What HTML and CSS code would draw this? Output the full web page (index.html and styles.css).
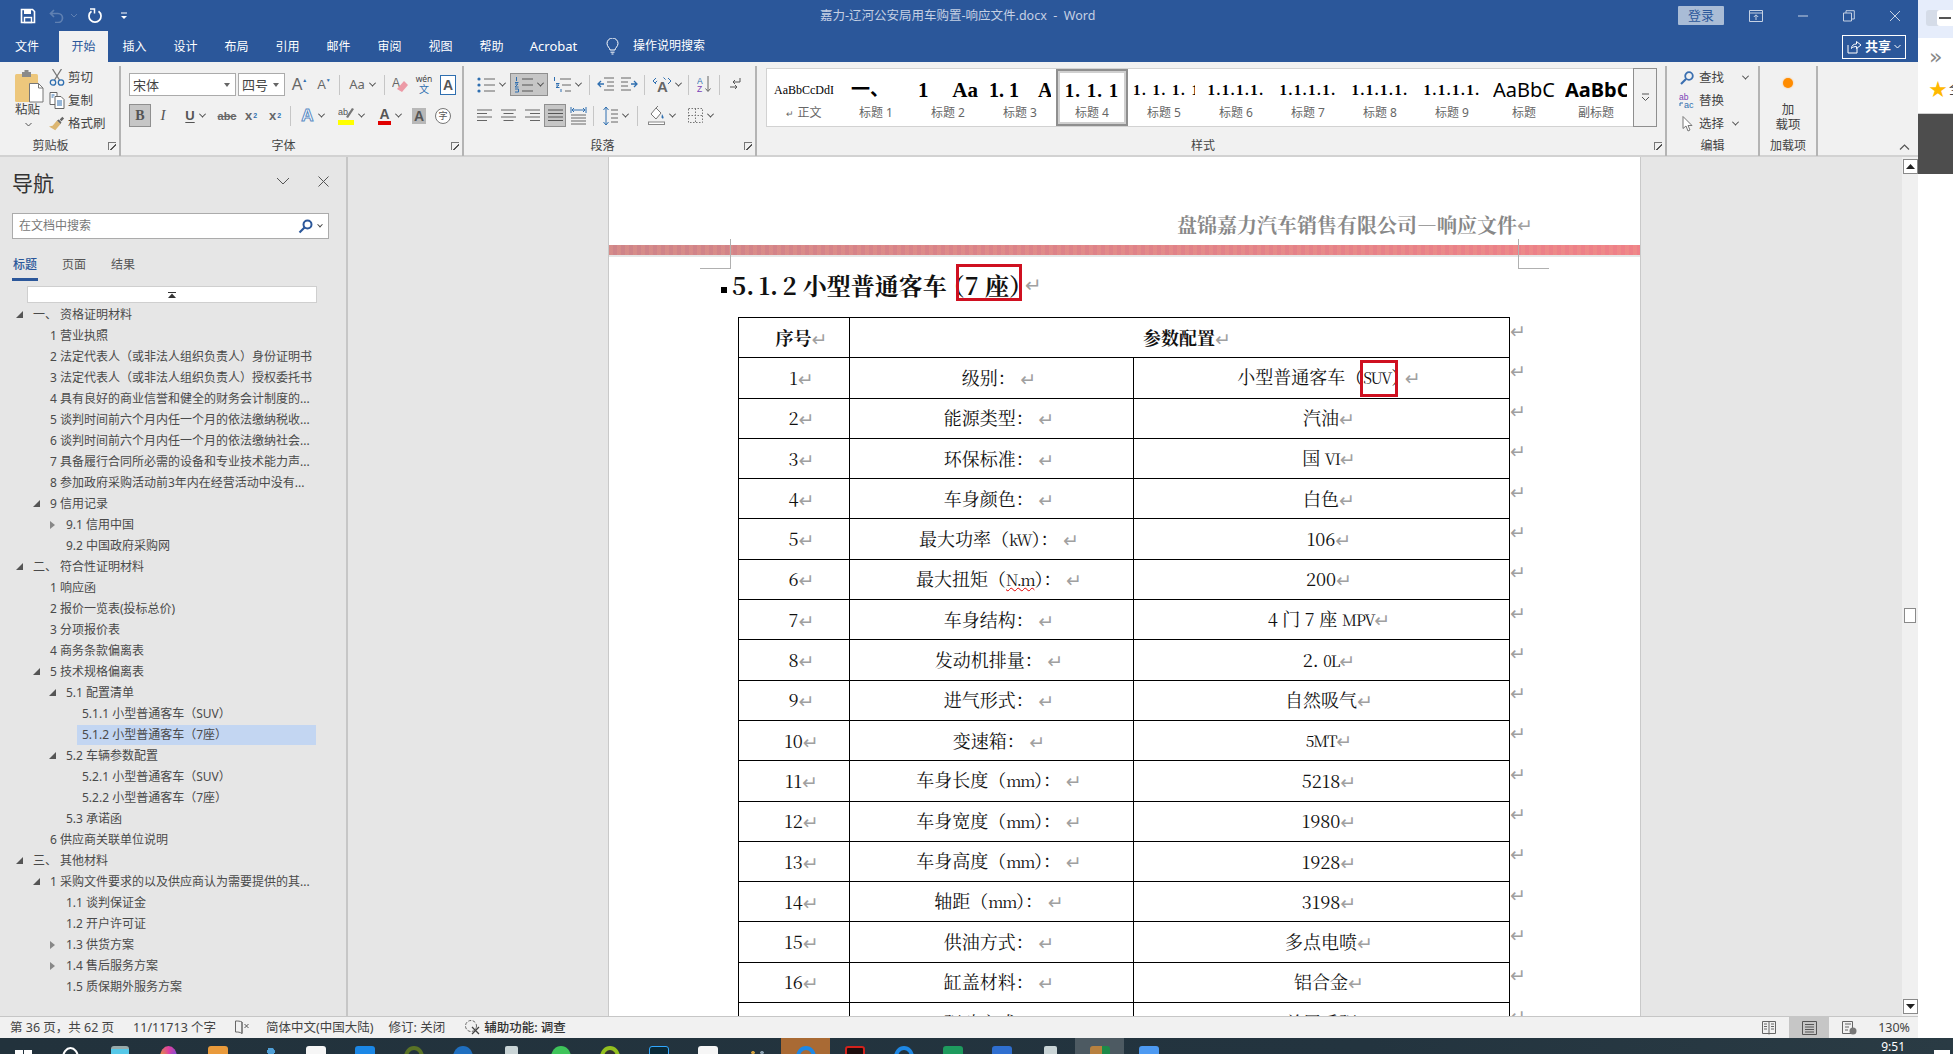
FILE: index.html
```html
<!DOCTYPE html>
<html lang="zh-CN">
<head>
<meta charset="utf-8">
<title>嘉力-辽河公安局用车购置-响应文件.docx - Word</title>
<link rel="stylesheet" href="styles.css">
</head>
<body>
<div class="screen">
<div class="word">
  <header class="titlebar">
    <div class="qat">
      <svg class="q-save" width="16" height="16" viewBox="0 0 16 16"><path d="M1.5 1.5h11l2 2v11h-13z" fill="none" stroke="#fff" stroke-width="1.6"/><rect x="4" y="2" width="7" height="4" fill="#fff"/><rect x="4.5" y="9.5" width="7" height="5" fill="none" stroke="#fff" stroke-width="1.4"/></svg>
      <svg class="q-undo" width="28" height="15" viewBox="0 0 28 15"><path d="M5 2L1.5 5.5 5 9M2 5.5h7a4.5 4.5 0 0 1 0 9H6" fill="none" stroke="#5f80b2" stroke-width="1.7"/><path d="M22 6l3 3 3-3" fill="none" stroke="#5f80b2" stroke-width="1"/></svg>
      <svg class="q-redo" width="14" height="16" viewBox="0 0 14 16"><path d="M3.5 3.2a6 6 0 1 0 7 0" fill="none" stroke="#fff" stroke-width="1.7"/><path d="M2 1h4.5v4.6" fill="none" stroke="#fff" stroke-width="1.5"/></svg>
      <svg class="q-more" width="8" height="8" viewBox="0 0 8 8"><path d="M1 1h6" stroke="#fff"/><path d="M1 4h6L4 7z" fill="#fff"/></svg>
    </div>
    <div class="doc-title">嘉力-辽河公安局用车购置-响应文件.docx  -  Word</div>
    <div class="win-controls">
      <span class="login">登录</span>
      <svg class="wc wc-first" width="14" height="12" viewBox="0 0 14 12"><path d="M.5.5h13v11H.5zM.5 3h13M7 10V5M4.8 7L7 4.8 9.2 7" fill="none" stroke="#c6d2e4"/></svg>
      <svg class="wc" width="12" height="12" viewBox="0 0 12 12"><path d="M1 6h10" stroke="#c6d2e4"/></svg>
      <svg class="wc" width="12" height="12" viewBox="0 0 12 12"><path d="M.5 3h8v8h-8zM3 3V.7h8.3V9H8.5" fill="none" stroke="#c6d2e4"/></svg>
      <svg class="wc" width="12" height="12" viewBox="0 0 12 12"><path d="M1 1l10 10M11 1L1 11" stroke="#c6d2e4"/></svg>
    </div>
  </header>

  <nav class="tabs">
    <span class="tab first">文件</span>
    <span class="tab active">开始</span>
    <span class="tab">插入</span>
    <span class="tab">设计</span>
    <span class="tab">布局</span>
    <span class="tab">引用</span>
    <span class="tab">邮件</span>
    <span class="tab">审阅</span>
    <span class="tab">视图</span>
    <span class="tab">帮助</span>
    <span class="tab acro">Acrobat</span>
    <svg class="bulb" width="13" height="17" viewBox="0 0 13 17"><path d="M4 12c0-2-3-3.500-3-6.500a5.500 5.500 0 0 1 11 0c0 3-3 4.500-3 6.500zM4.500 14.200h4M5.500 16h2" fill="none" stroke="#fff"/></svg>
    <span class="tell">操作说明搜索</span>
    <span class="share">
      <svg width="15" height="15" viewBox="0 0 15 15"><path d="M1 6v8h9V9M4.500 9.500c0-3 2-4.500 5-4.500V2.500L14 6l-4.500 3.500V7.500c-2 0-4 .5-5 2z" fill="none" stroke="#fff"/></svg>
      <b>共享</b>
      <svg width="7" height="5" viewBox="0 0 7 5"><path d="M.5 1l3 3 3-3" fill="none" stroke="#fff"/></svg>
    </span>
  </nav>

  <section class="ribbon">
    <div class="group g-clip">
      <div class="clip-body">
        <div class="paste">
          <svg width="29" height="33" viewBox="0 0 29 33"><rect x="0" y="4" width="23" height="28" rx="1.500" fill="#edc77c"/><rect x="7" y="2" width="9" height="5" fill="#8a8a8a"/><rect x="9.500" y="0" width="4" height="3" fill="#8a8a8a"/><path d="M14.500 13.500h9l4.500 4.500v14h-13.500z" fill="#fff" stroke="#777"/><path d="M23.500 13.500V18H28" fill="none" stroke="#777"/></svg>
          <span>粘贴</span>
          <svg class="caret" width="7" height="5" viewBox="0 0 7 5"><path d="M.5 1l3 3 3-3" fill="none" stroke="#555"/></svg>
        </div>
        <div class="clip-list">
          <div class="clip-item"><svg width="15" height="17" viewBox="0 0 15 17"><path d="M3 0l7 11M12 0L5 11" stroke="#777" stroke-width="1.300"/><circle cx="3.500" cy="13.500" r="2.700" fill="none" stroke="#2f6fb0" stroke-width="1.300"/><circle cx="11.500" cy="13.500" r="2.700" fill="none" stroke="#2f6fb0" stroke-width="1.300"/></svg><span>剪切</span></div>
          <div class="clip-item"><svg width="15" height="17" viewBox="0 0 15 17"><path d="M.5.500h7v12h-7z" fill="#fff" stroke="#666"/><path d="M5.500 4.500h6l3 3v9h-9z" fill="#fff" stroke="#666"/><path d="M7.500 9h5M7.500 11h5M7.500 13h5M2 3h3M2 5h2" stroke="#2f6fb0"/></svg><span>复制</span></div>
          <div class="clip-item"><svg width="18" height="17" viewBox="0 0 18 17"><path d="M9 5l4 4-6 7-7-4 4-1z" fill="#dcb671"/><path d="M9 5l2-1 3 3-1 2zM12 4l3-3 2 2-3 3z" fill="#666"/></svg><span>格式刷</span></div>
        </div>
      </div>
      <div class="g-label">剪贴板<i class="launch"></i></div>
    </div>

    <div class="group g-font">
      <div class="g-rows">
        <div class="trow">
          <div class="combo w107"><span>宋体</span><i class="drop"></i></div>
          <div class="combo w47"><span>四号</span><i class="drop"></i></div>
          <span class="t w25 ag">A<sup class="up">▲</sup></span>
          <span class="t w24 ag small">A<sup class="up">▼</sup></span>
          <i class="sep"></i>
          <span class="t w38 gray">Aa<i class="chev"></i></span>
          <i class="sep"></i>
          <span class="t w24"><svg width="17" height="18" viewBox="0 0 17 18"><text x="0" y="11" font-size="12" fill="#666" font-family="Liberation Sans">A</text><path d="M5 13l7-8 4 4-6 7z" fill="#ec9aa6"/></svg></span>
          <span class="t w24 wen"><small>wén</small><em>文</em></span>
          <span class="t w24"><span class="abox">A</span></span>
        </div>
        <div class="trow">
          <span class="t w22 on bold">B</span>
          <span class="t w24 ital">I</span>
          <span class="t w40 under"><u>U</u><i class="chev"></i></span>
          <span class="t w24 abc">abc</span>
          <span class="t w24 xs">x<sub>2</sub></span>
          <span class="t w24 xs">x<sup>2</sup></span>
          <i class="sep"></i>
          <span class="t w37 glow">A<i class="chev"></i></span>
          <span class="t w40 hl"><svg width="16" height="19" viewBox="0 0 16 19"><text x="0" y="9" font-size="9" fill="#555" font-family="Liberation Sans">ab</text><path d="M8 11l6-9 2 1-6 9z" fill="#777"/><rect y="14" width="16" height="5" fill="#ff0"/></svg><i class="chev"></i></span>
          <span class="t w37 redA"><span>A</span><i class="chev"></i></span>
          <span class="t w22"><span class="shade">A</span></span>
          <span class="t w26"><span class="circ">字</span></span>
        </div>
      </div>
      <div class="g-label">字体<i class="launch"></i></div>
    </div>

    <div class="group g-para">
      <div class="g-rows">
        <div class="trow">
          <span class="t w38"><svg width="18" height="16" viewBox="0 0 18 16"><path d="M7 2h11M7 8h11M7 14h11" stroke="#666"/><circle cx="2" cy="2" r="1.600" fill="#2f6fb0"/><circle cx="2" cy="8" r="1.600" fill="#2f6fb0"/><circle cx="2" cy="14" r="1.600" fill="#2f6fb0"/></svg><i class="chev"></i></span>
          <span class="t w38 on"><svg width="18" height="16" viewBox="0 0 18 16"><path d="M7 2h11M7 8h11M7 14h11" stroke="#555"/><path d="M1.500 0v4M0 5.500h3.500M0 7h3L0 10h3.500M0 12h3.500v3H0" stroke="#2f6fb0" fill="none"/></svg><i class="chev"></i></span>
          <span class="t w38"><svg width="18" height="16" viewBox="0 0 18 16"><path d="M7 2h11M9 8h9M12 14h6" stroke="#666"/><path d="M1.500 0v4M3 6.500h3.500M3 8h3L3 10.500h3.500M8 12v3" stroke="#2f6fb0" fill="none"/></svg><i class="chev"></i></span>
          <i class="sep"></i>
          <span class="t w24"><svg width="17" height="15" viewBox="0 0 17 15"><path d="M7 1h10M10 5h7M10 9h7M7 13h10" stroke="#666"/><path d="M7 7H1M4 4L1 7l3 3" fill="none" stroke="#2f6fb0" stroke-width="1.300"/></svg></span>
          <span class="t w24"><svg width="17" height="15" viewBox="0 0 17 15"><path d="M0 1h10M0 5h7M0 9h7M0 13h10" stroke="#666"/><path d="M10 7h6M13 4l3 3-3 3" fill="none" stroke="#2f6fb0" stroke-width="1.300"/></svg></span>
          <i class="sep"></i>
          <span class="t w37"><svg width="18" height="17" viewBox="0 0 18 17"><path d="M2 7l7-7 7 7" fill="none" stroke="#2f6fb0" stroke-width="1" stroke-dasharray="3 9"/><text x="4" y="16" font-size="15" font-weight="700" fill="#666" font-family="Liberation Sans">A</text><path d="M0 5l3-3M0 5l3 3M18 5l-3-3M18 5l-3 3" stroke="#2f6fb0"/></svg><i class="chev"></i></span>
          <i class="sep"></i>
          <span class="t w24"><svg width="15" height="17" viewBox="0 0 15 17"><text x="0" y="7.500" font-size="8.500" fill="#2f6fb0" font-family="Liberation Sans">A</text><text x="0" y="16" font-size="8.500" fill="#7a3fb5" font-family="Liberation Sans">Z</text><path d="M11 0v15M8.500 12.500L11 15.500l2.500-3" fill="none" stroke="#666"/></svg></span>
          <i class="sep"></i>
          <span class="t w24"><svg width="11" height="13" viewBox="0 0 11 13"><path d="M10 0v4H3M5 2L3 4l2 2M0 9h7M5 7l2 2-2 2" fill="none" stroke="#555"/></svg></span>
        </div>
        <div class="trow">
          <span class="t w24"><svg width="15" height="13" viewBox="0 0 15 13"><path d="M0 1h15M0 4.500h10M0 8h15M0 11.500h10" stroke="#666"/></svg></span>
          <span class="t w24"><svg width="15" height="13" viewBox="0 0 15 13"><path d="M0 1h15M2.500 4.500h10M0 8h15M2.500 11.500h10" stroke="#666"/></svg></span>
          <span class="t w24"><svg width="15" height="13" viewBox="0 0 15 13"><path d="M0 1h15M5 4.500h10M0 8h15M5 11.500h10" stroke="#666"/></svg></span>
          <span class="t w22 on"><svg width="15" height="13" viewBox="0 0 15 13"><path d="M0 1h15M0 4.500h15M0 8h15M0 11.500h15" stroke="#555"/></svg></span>
          <span class="t w24"><svg width="17" height="18" viewBox="0 0 17 18"><path d="M1 0v6M16 0v6M2 3h13M4 1L2 3l2 2M13 1l2 2-2 2" fill="none" stroke="#2f6fb0"/><path d="M1 8h15M1 11h15M1 14h15M1 17h15" stroke="#666"/></svg></span>
          <i class="sep"></i>
          <span class="t w37"><svg width="15" height="20" viewBox="0 0 15 20"><path d="M3 1v18M.5 4L3 1l2.500 3M.5 16L3 19l2.500-3" fill="none" stroke="#2f6fb0"/><path d="M8 4h7M8 8h7M8 12h7M8 16h7" stroke="#666"/></svg><i class="chev"></i></span>
          <i class="sep"></i>
          <span class="t w40"><svg width="17" height="19" viewBox="0 0 17 19"><path d="M3 8l5-6 5 5-5 6zM8 2l2-2" fill="#fff" stroke="#777"/><path d="M14 8c1 2 2 3 1.500 4s-2 .5-2-1z" fill="#2f6fb0"/><rect x=".5" y="16" width="16" height="2.500" fill="#fff" stroke="#888"/></svg><i class="chev"></i></span>
          <span class="t w38"><svg width="15" height="15" viewBox="0 0 15 15"><path d="M.5.500h14v14H.5zM7.500.5v14M.5 7.500h14" fill="none" stroke="#777" stroke-dasharray="1.500 1.500"/></svg><i class="chev"></i></span>
        </div>
      </div>
      <div class="g-label">段落<i class="launch"></i></div>
    </div>

    <div class="group g-style">
      <div class="gallery-row">
        <div class="gallery">
          <div class="sty"><span class="pv p0">AaBbCcDdI</span><span class="sl"><i class="tiny">↵</i> 正文</span></div>
          <div class="sty"><span class="pv p1">一、</span><span class="sl">标题 1</span></div>
          <div class="sty"><span class="pv p2">1    Aa</span><span class="sl">标题 2</span></div>
          <div class="sty"><span class="pv p3">1. 1    Aa</span><span class="sl">标题 3</span></div>
          <div class="sty sel"><span class="pv p4">1. 1. 1</span><span class="sl">标题 4</span></div>
          <div class="sty"><span class="pv p5">1. 1. 1. 1</span><span class="sl">标题 5</span></div>
          <div class="sty"><span class="pv p5">1.1.1.1.</span><span class="sl">标题 6</span></div>
          <div class="sty"><span class="pv p5">1.1.1.1.</span><span class="sl">标题 7</span></div>
          <div class="sty"><span class="pv p5">1.1.1.1.</span><span class="sl">标题 8</span></div>
          <div class="sty"><span class="pv p5">1.1.1.1.</span><span class="sl">标题 9</span></div>
          <div class="sty"><span class="pv p6">AaBbC</span><span class="sl">标题</span></div>
          <div class="sty"><span class="pv p7">AaBbCc</span><span class="sl">副标题</span></div>
        </div>
        <div class="gal-more"><svg width="9" height="9" viewBox="0 0 9 9"><path d="M1 1h7" stroke="#555"/><path d="M1 4l3.500 3.500L8 4" fill="none" stroke="#555"/></svg></div>
      </div>
      <div class="g-label">样式<i class="launch"></i></div>
    </div>

    <div class="group g-edit">
      <div class="edit-list">
        <div class="edit-item"><svg width="14" height="14" viewBox="0 0 14 14"><circle cx="9" cy="5" r="3.800" fill="none" stroke="#3a6fb0" stroke-width="1.800"/><path d="M6 8l-5 5" stroke="#3a6fb0" stroke-width="2.200"/></svg><span>查找</span><i class="chev far"></i></div>
        <div class="edit-item"><svg width="16" height="15" viewBox="0 0 16 15"><text x="0" y="7" font-size="8.500" fill="#7a3fb5" font-family="Liberation Sans">ab</text><text x="5" y="15" font-size="9" fill="#2f6fb0" font-family="Liberation Sans">ac</text><path d="M4 10H1v3" fill="none" stroke="#2f6fb0"/></svg><span>替换</span></div>
        <div class="edit-item"><svg width="14" height="16" viewBox="0 0 14 16"><path d="M3 .500v12l3-2.500 2 5 2-1-2-4.500h4z" fill="#fff" stroke="#777"/></svg><span>选择</span><i class="chev"></i></div>
      </div>
      <div class="g-label">编辑</div>
    </div>

    <div class="group g-addin">
      <div class="addin-body"><i class="dot"></i><span>加<br>载项</span></div>
      <div class="g-label">加载项</div>
    </div>

    <div class="collapse"><svg width="11" height="6" viewBox="0 0 11 6"><path d="M1 5.500l4.500-4.500L10 5.500" fill="none" stroke="#555" stroke-width="1.200"/></svg></div>
  </section>

  <main class="workspace">
    <aside class="nav">
      <div class="nav-head">
        <h2>导航</h2>
        <svg class="nav-chev" width="14" height="8" viewBox="0 0 14 8"><path d="M1 1l6 6 6-6" fill="none" stroke="#555"/></svg>
        <svg class="nav-x" width="11" height="11" viewBox="0 0 11 11"><path d="M.5.500l10 10M10.500.5l-10 10" stroke="#555"/></svg>
      </div>
      <div class="search">
        <span>在文档中搜索</span>
        <svg width="15" height="15" viewBox="0 0 15 15"><circle cx="9.500" cy="5.500" r="4" fill="none" stroke="#2b579a" stroke-width="2"/><path d="M6.500 8.500L1.500 13.500" stroke="#2b579a" stroke-width="2.200"/></svg>
        <i class="chev"></i>
      </div>
      <div class="nav-tabs"><span class="on">标题</span><span>页面</span><span>结果</span></div>
      <div class="jump"><svg width="8" height="6" viewBox="0 0 8 6"><path d="M0 .5h8" stroke="#333"/><path d="M4 1.500L8 6H0z" fill="#333"/></svg></div>
      <div class="tree">
        <div class="row l0"><i class="tw open"></i><span>一、 资格证明材料</span></div>
        <div class="row l1"><i class="tw"></i><span>1 营业执照</span></div>
        <div class="row l1"><i class="tw"></i><span>2 法定代表人（或非法人组织负责人）身份证明书</span></div>
        <div class="row l1"><i class="tw"></i><span>3 法定代表人（或非法人组织负责人）授权委托书</span></div>
        <div class="row l1"><i class="tw"></i><span>4 具有良好的商业信誉和健全的财务会计制度的...</span></div>
        <div class="row l1"><i class="tw"></i><span>5 谈判时间前六个月内任一个月的依法缴纳税收...</span></div>
        <div class="row l1"><i class="tw"></i><span>6 谈判时间前六个月内任一个月的依法缴纳社会...</span></div>
        <div class="row l1"><i class="tw"></i><span>7 具备履行合同所必需的设备和专业技术能力声...</span></div>
        <div class="row l1"><i class="tw"></i><span>8 参加政府采购活动前3年内在经营活动中没有...</span></div>
        <div class="row l1"><i class="tw open"></i><span>9 信用记录</span></div>
        <div class="row l2"><i class="tw shut"></i><span>9.1 信用中国</span></div>
        <div class="row l2"><i class="tw"></i><span>9.2 中国政府采购网</span></div>
        <div class="row l0"><i class="tw open"></i><span>二、 符合性证明材料</span></div>
        <div class="row l1"><i class="tw"></i><span>1 响应函</span></div>
        <div class="row l1"><i class="tw"></i><span>2 报价一览表(投标总价)</span></div>
        <div class="row l1"><i class="tw"></i><span>3 分项报价表</span></div>
        <div class="row l1"><i class="tw"></i><span>4 商务条款偏离表</span></div>
        <div class="row l1"><i class="tw open"></i><span>5 技术规格偏离表</span></div>
        <div class="row l2"><i class="tw open"></i><span>5.1 配置清单</span></div>
        <div class="row l3"><i class="tw"></i><span>5.1.1 小型普通客车（SUV）</span></div>
        <div class="row l3 current"><i class="tw"></i><span>5.1.2 小型普通客车（7座）</span></div>
        <div class="row l2"><i class="tw open"></i><span>5.2 车辆参数配置</span></div>
        <div class="row l3"><i class="tw"></i><span>5.2.1 小型普通客车（SUV）</span></div>
        <div class="row l3"><i class="tw"></i><span>5.2.2 小型普通客车（7座）</span></div>
        <div class="row l2"><i class="tw"></i><span>5.3 承诺函</span></div>
        <div class="row l1"><i class="tw"></i><span>6 供应商关联单位说明</span></div>
        <div class="row l0"><i class="tw open"></i><span>三、 其他材料</span></div>
        <div class="row l1"><i class="tw open"></i><span>1 采购文件要求的以及供应商认为需要提供的其...</span></div>
        <div class="row l2"><i class="tw"></i><span>1.1 谈判保证金</span></div>
        <div class="row l2"><i class="tw"></i><span>1.2 开户许可证</span></div>
        <div class="row l2"><i class="tw shut"></i><span>1.3 供货方案</span></div>
        <div class="row l2"><i class="tw shut"></i><span>1.4 售后服务方案</span></div>
        <div class="row l2"><i class="tw"></i><span>1.5 质保期外服务方案</span></div>
      </div>
    </aside>
    <div class="gutter-left"></div>
    <article class="page">
      <i class="crop crop-l"></i>
      <i class="crop crop-r"></i>
      <div class="page-header"><span>盘锦嘉力汽车销售有限公司—响应文件</span><i class="pm">↵</i></div>
      <div class="band"></div>
      <h1 class="heading"><i class="bullet"></i><span class="num">5. 1. 2</span> 小型普通客车 <span class="boxed">（7 座）</span><i class="pm">↵</i></h1>
      <table class="spec">
        <colgroup><col class="c1"><col class="c2"><col class="c3"><col class="c4"></colgroup>
        <thead><tr><th>序号<i class="pm">↵</i></th><th colspan="2">参数配置<i class="pm">↵</i></th><td class="end"><i class="pm">↵</i></td></tr></thead>
        <tbody>
          <tr><td>1<i class="pm">↵</i></td><td>级别： <i class="pm">↵</i></td><td>小型普通客车（<span class="boxed b2"><span class="nar">SUV</span>）</span> <i class="pm">↵</i></td><td class="end"><i class="pm">↵</i></td></tr>
          <tr><td>2<i class="pm">↵</i></td><td>能源类型： <i class="pm">↵</i></td><td>汽油<i class="pm">↵</i></td><td class="end"><i class="pm">↵</i></td></tr>
          <tr><td>3<i class="pm">↵</i></td><td>环保标准： <i class="pm">↵</i></td><td>国 <span class="nar">VI</span><i class="pm">↵</i></td><td class="end"><i class="pm">↵</i></td></tr>
          <tr><td>4<i class="pm">↵</i></td><td>车身颜色： <i class="pm">↵</i></td><td>白色<i class="pm">↵</i></td><td class="end"><i class="pm">↵</i></td></tr>
          <tr><td>5<i class="pm">↵</i></td><td>最大功率（<span class="nar">kW</span>）： <i class="pm">↵</i></td><td>106<i class="pm">↵</i></td><td class="end"><i class="pm">↵</i></td></tr>
          <tr><td>6<i class="pm">↵</i></td><td>最大扭矩（<span class="squiggle nar">N.m</span>）： <i class="pm">↵</i></td><td>200<i class="pm">↵</i></td><td class="end"><i class="pm">↵</i></td></tr>
          <tr><td>7<i class="pm">↵</i></td><td>车身结构： <i class="pm">↵</i></td><td>4 门 7 座 <span class="nar">MPV</span><i class="pm">↵</i></td><td class="end"><i class="pm">↵</i></td></tr>
          <tr><td>8<i class="pm">↵</i></td><td>发动机排量： <i class="pm">↵</i></td><td>2. <span class="nar">0L</span><i class="pm">↵</i></td><td class="end"><i class="pm">↵</i></td></tr>
          <tr><td>9<i class="pm">↵</i></td><td>进气形式： <i class="pm">↵</i></td><td>自然吸气<i class="pm">↵</i></td><td class="end"><i class="pm">↵</i></td></tr>
          <tr><td>10<i class="pm">↵</i></td><td>变速箱： <i class="pm">↵</i></td><td><span class="nar">5MT</span><i class="pm">↵</i></td><td class="end"><i class="pm">↵</i></td></tr>
          <tr><td>11<i class="pm">↵</i></td><td>车身长度（<span class="nar">mm</span>）： <i class="pm">↵</i></td><td>5218<i class="pm">↵</i></td><td class="end"><i class="pm">↵</i></td></tr>
          <tr><td>12<i class="pm">↵</i></td><td>车身宽度（<span class="nar">mm</span>）： <i class="pm">↵</i></td><td>1980<i class="pm">↵</i></td><td class="end"><i class="pm">↵</i></td></tr>
          <tr><td>13<i class="pm">↵</i></td><td>车身高度（<span class="nar">mm</span>）： <i class="pm">↵</i></td><td>1928<i class="pm">↵</i></td><td class="end"><i class="pm">↵</i></td></tr>
          <tr><td>14<i class="pm">↵</i></td><td>轴距（<span class="nar">mm</span>）： <i class="pm">↵</i></td><td>3198<i class="pm">↵</i></td><td class="end"><i class="pm">↵</i></td></tr>
          <tr><td>15<i class="pm">↵</i></td><td>供油方式： <i class="pm">↵</i></td><td>多点电喷<i class="pm">↵</i></td><td class="end"><i class="pm">↵</i></td></tr>
          <tr><td>16<i class="pm">↵</i></td><td>缸盖材料： <i class="pm">↵</i></td><td>铝合金<i class="pm">↵</i></td><td class="end"><i class="pm">↵</i></td></tr>
          <tr><td>17<i class="pm">↵</i></td><td>驱动方式： <i class="pm">↵</i></td><td>前置后驱<i class="pm">↵</i></td><td class="end"><i class="pm">↵</i></td></tr>
        </tbody>
      </table>
    </article>
    <div class="gutter-right">
      <div class="vscroll">
        <span class="sb-btn"><svg width="9" height="5" viewBox="0 0 9 5"><path d="M4.500 0L9 5H0z" fill="#222"/></svg></span>
        <span class="sb-thumb"></span>
        <span class="sb-btn"><svg width="9" height="5" viewBox="0 0 9 5"><path d="M4.500 5L9 0H0z" fill="#222"/></svg></span>
      </div>
    </div>
  </main>

  <footer class="status">
    <span class="s1">第 36 页，共 62 页</span>
    <span class="s2">11/11713 个字</span>
    <svg class="s3" width="15" height="15" viewBox="0 0 15 15"><path d="M7 2C5 1 3 1 .5 1v11c2.500 0 4.500 0 6.500 1.500zM7 2v11.500" fill="none" stroke="#666"/><path d="M9.500 4l4 4M13.500 4l-4 4" stroke="#555"/></svg>
    <span class="s4">简体中文(中国大陆)</span>
    <span class="s5">修订: 关闭</span>
    <svg class="s6" width="17" height="17" viewBox="0 0 17 17"><circle cx="7" cy="7" r="5.500" fill="none" stroke="#666" stroke-dasharray="3 1.500"/><path d="M8 8l7 7M15 8l-7 7" stroke="#444" stroke-width="1.300"/></svg>
    <span class="s7">辅助功能: 调查</span>
    <span class="spacer"></span>
    <svg class="v1" width="14" height="14" viewBox="0 0 14 14"><path d="M.5.500h13v12H.5zM7 .5v13M2 3h3M2 5.500h3M2 8h3M9 3h3M9 5.500h3M9 8h3" fill="none" stroke="#666"/></svg>
    <span class="v-on"><svg width="15" height="14" viewBox="0 0 15 14"><path d="M.5.500h14v13H.5zM3 3.500h9M3 6h9M3 8.500h9M3 11h9" fill="none" stroke="#555"/></svg></span>
    <svg class="v3" width="15" height="14" viewBox="0 0 15 14"><path d="M.5.500h10v12H.5zM3 3h6M3 6h4M3 9h3" fill="none" stroke="#666"/><circle cx="11" cy="10" r="3.500" fill="#777"/></svg>
    <span class="zoom">130%</span>
  </footer>
</div>

<aside class="side">
  <div class="side-top"><span class="toggle"><i></i><b></b></span></div>
  <div class="side-mid">
    <span class="dbl">»</span>
    <span class="fav"><span class="star">★</span>全</span>
  </div>
  <div class="side-dark"></div>
</aside>
</div>

<div class="taskbar">
  <span class="task"><i class="ti win"></i></span>
  <span class="task"><i class="ti ring white"></i></span>
  <span class="task"><i class="ti box grayc"></i></span>
  <span class="task"><i class="ti blob rainbow"></i></span>
  <span class="task"><i class="ti box orange"></i></span>
  <span class="task"><i class="ti blob bluedots"></i></span>
  <span class="task"><i class="ti box whitec"></i></span>
  <span class="task"><i class="ti box bluec"></i></span>
  <span class="task"><i class="ti ring olive"></i></span>
  <span class="task"><i class="ti blob globe"></i></span>
  <span class="task"><i class="ti slim graylight"></i></span>
  <span class="task"><i class="ti blob greenc"></i></span>
  <span class="task"><i class="ti ring lime"></i></span>
  <span class="task"><i class="ti box psc"></i></span>
  <span class="task"><i class="ti box whitec"></i></span>
  <span class="task"><i class="ti dots"></i></span>
  <span class="task tile-o"><i class="ti ring blue"></i></span>
  <span class="task"><i class="ti box redc"></i></span>
  <span class="task"><i class="ti ring blue"></i></span>
  <span class="task"><i class="ti box excel"></i></span>
  <span class="task"><i class="ti box wordc"></i></span>
  <span class="task"><i class="ti slim graylight"></i></span>
  <span class="task tile-a"><i class="ti box brown"></i></span>
  <span class="task"><i class="ti box bluec2"></i></span>
  <span class="spacer"></span>
  <span class="clock">9:51</span>
  <i class="notify"></i>
</div>
</body>
</html>
```

FILE: styles.css
```css
* { box-sizing: border-box; }
html, body { margin: 0; height: 100%; overflow: hidden; }
body {
  width: 1953px; height: 1054px; display: flex; flex-direction: column;
  font: 12px/1.2 "Noto Sans", "Noto Sans CJK SC", sans-serif; color: #444; background: #fff;
}
i { font-style: normal; }
svg { display: block; flex: none; }
.screen { display: flex; height: 1038px; }
.word { width: 1918px; display: flex; flex-direction: column; }
.spacer { flex: 1; }

/* title bar */
.titlebar { height: 31px; background: #2b579a; display: flex; align-items: center; position: relative; color: #c5d0e4; }
.qat { display: flex; align-items: center; padding-left: 20px; width: 700px; }
.q-undo { margin-left: 13px; }
.q-redo { margin-left: 11px; }
.q-more { margin-left: 18px; }
.doc-title { width: 978px; padding-left: 120px; white-space: pre; font-size: 12.500px; }
.win-controls { display: flex; align-items: center; }
.login { width: 46px; height: 19px; background: #a9bcd6; color: #2b579a; text-align: center; line-height: 19px; border-radius: 1px; font-size: 13px; }
.wc { margin-left: 34px; }
.wc-first { margin-left: 25px; }

/* tabs */
.tabs { height: 31px; background: #2b579a; display: flex; align-items: center; color: #fff; }
.tab { width: 51px; text-align: center; line-height: 31px; height: 31px; }
.tab.first { width: 54px; margin-right: 5px; }
.tab.active { width: 49px; background: #f1f1f1; color: #2b579a; margin-right: 1px; }
.tab.acro { width: 65px; font-size: 13px; margin-left: 4px; }
.bulb { margin-left: 20px; }
.tell { margin-left: 14px; }
.share { margin-left: auto; margin-right: 12px; width: 64px; height: 24px; border: 1px solid #fff; display: flex; align-items: center; gap: 3px; padding-left: 4px; font-size: 13px; }
.share b { font-weight: 700; }

/* ribbon */
.ribbon { height: 95px; background: #f1f1f1; display: flex; border-bottom: 2px solid #d2d2d2; position: relative; }
.group { display: flex; flex-direction: column; height: 90px; margin-top: 4px; border-right: 2px solid #b4b4b4; position: relative; }
.g-label { position: absolute; left: 0; right: 0; bottom: 2px; height: 16px; line-height: 16px; text-align: center; color: #444; }
.g-clip .g-label { padding-right: 18px; }
.g-font .g-label { padding-right: 16px; }
.g-para .g-label { padding-right: 14px; }
.g-style .g-label { padding-right: 16px; }
.launch { position: absolute; right: 3px; top: 4px; width: 8px; height: 8px; border-left: 1px solid #777; border-top: 1px solid #777; background: linear-gradient(135deg, transparent 55%, #555 55%, #555 70%, transparent 70%); }
.g-clip { width: 121px; }
.g-font { width: 343px; padding-left: 8px; }
.g-para { width: 293px; padding-left: 8px; }
.g-style { width: 910px; padding-left: 9px; }
.g-edit { width: 93px; }
.g-addin { width: 58px; }
.clip-body { display: flex; }
.paste { width: 50px; padding-left: 15px; padding-top: 4px; display: flex; flex-direction: column; }
.paste span { margin-top: -2px; line-height: 18px; font-size: 12.500px; white-space: nowrap; }
.paste .caret { margin: 3px 0 0 10px; }
.clip-list { display: flex; flex-direction: column; }
.clip-item { height: 23px; display: flex; align-items: center; width: 70px; gap: 3px; font-size: 12.500px; }
.clip-item svg { width: 16px; }
.g-rows { padding-top: 7px; display: flex; flex-direction: column; gap: 8px; }
.trow { display: flex; align-items: center; height: 23px; }
.combo { height: 23px; background: #fff; border: 1px solid #ababab; display: flex; align-items: center; justify-content: space-between; padding: 0 5px 0 3px; margin-right: 2px; font-size: 13px; font-family: "Noto Sans CJK SC", sans-serif; }
.drop { width: 0; height: 0; border: 3px solid transparent; border-top: 4px solid #666; border-bottom: 0; }
.w107 { width: 107px; } .w47 { width: 47px; }
.t { height: 23px; display: flex; align-items: center; justify-content: center; gap: 5px; flex: none; color: #555; position: relative; }
.w22 { width: 22px; } .w24 { width: 24px; } .w25 { width: 25px; } .w26 { width: 26px; } .w37 { width: 37px; } .w38 { width: 38px; } .w40 { width: 40px; }
.t.on { background: #c6c6c6; border: 1px solid #8f8f8f; }
.sep { width: 1px; height: 20px; background: #c6c6c6; margin: 0 3px; flex: none; }
.chev { display: inline-block; width: 5px; height: 5px; border-right: 1px solid #444; border-bottom: 1px solid #444; transform: rotate(45deg) translate(-1px,-1px); flex: none; }
.ag { font-size: 16px; color: #666; font-family: "Liberation Sans"; }
.ag.small { font-size: 13px; }
.ag sup.up { font-size: 5px; color: #2f6fb0; margin: -10px 0 0 -5px; }
.gray { font-size: 13px; color: #666; }
.wen { flex-direction: column; gap: 0; line-height: 1; }
.wen small { font-size: 8.500px; color: #444; }
.wen em { font-style: normal; font-size: 10px; color: #2f6fb0; }
.abox { width: 16px; height: 20px; border: 1px solid #2f6fb0; background: #fff; font: 700 14px/18px "Liberation Sans"; color: #555; text-align: center; }
.bold { font: 700 14px "Liberation Serif"; }
.ital { font: italic 15px "Liberation Serif"; }
.under { font: 700 13px "Liberation Sans"; }
.under u { text-underline-offset: 2px; }
.abc { font: 700 11px "Liberation Sans"; color: #666; text-decoration: line-through; }
.xs { font: 700 13px "Liberation Sans"; color: #666; }
.xs sub, .xs sup { font-size: 7px; color: #2f6fb0; margin-left: -4px; }
.glow { font: 700 17px "Liberation Sans"; color: #fff; -webkit-text-stroke: 1px #5b8cc4; }
.redA span { font: 700 14px/14px "Liberation Sans"; color: #555; border-bottom: 4px solid #e00000; padding: 0 1px; }
.shade { width: 14px; height: 16px; background: #b8b8b8; font: 700 14px/16px "Liberation Sans"; color: #555; text-align: center; }
.circ { width: 16px; height: 16px; border: 1px solid #777; border-radius: 50%; background: #fff; font-size: 9px; line-height: 14px; text-align: center; }

/* gallery */
.gallery-row { display: flex; padding-top: 2px; }
.gallery { width: 867px; height: 59px; background: #fff; border: 1px solid #d2d2d2; border-right: 0; display: flex; padding-left: 1px; }
.sty { width: 72px; flex: none; height: 57px; display: flex; flex-direction: column; align-items: center; overflow: hidden; }
.sty.sel { border: 2px solid #8f8f8f; outline: 2px solid #d0d0d0; outline-offset: -4px; }
.pv { height: 37px; line-height: 42px; width: 62px; overflow: hidden; white-space: pre; text-align: center; color: #000; flex: none; font-family: "Liberation Serif", "Noto Sans CJK SC", serif; }
.sl { color: #666; line-height: 14px; white-space: nowrap; }
.tiny { font-size: 9px; }
.sty.sel .pv { height: 35px; line-height: 40px; }
.p0 { font-size: 12px; }
.p1 { font-size: 19px; font-weight: 700; text-align: left; padding-left: 6px; }
.p2 { font-size: 21px; font-weight: 700; word-spacing: 1px; }
.p3 { font-size: 20px; font-weight: 700; text-align: left; }
.p4 { font-size: 19px; font-weight: 700; letter-spacing: 1px; }
.p5 { font-size: 15px; font-weight: 700; letter-spacing: 1.500px; }
.p6 { font: 20px/42px "Noto Sans", sans-serif; }
.p7 { font: 700 20px/42px "Noto Sans", sans-serif; text-align: left; }
.gal-more { width: 24px; height: 59px; border: 1px solid #8f8f8f; display: flex; align-items: center; justify-content: center; background: #f1f1f1; }

/* editing and add-ins */
.edit-list { padding-left: 12px; display: flex; flex-direction: column; }
.edit-item { height: 23px; display: flex; align-items: center; gap: 4px; font-size: 12.500px; }
.edit-item svg { width: 16px; }
.edit-item .chev { margin-left: 5px; }
.edit-item .far { margin-left: 15px; }
.addin-body { display: flex; flex-direction: column; align-items: center; padding-top: 12px; line-height: 15px; text-align: center; font-size: 12.500px; }
.addin-body span { margin-top: 14px; }
.dot { width: 10px; height: 10px; border-radius: 50%; background: #ff8c00; box-shadow: 0 0 2px #ffb566; }
.collapse { align-self: flex-end; margin: 0 0 1px 81px; padding-bottom: 4px; }

/* workspace */
.workspace { flex: 1; display: flex; min-height: 0; }
.nav { width: 348px; flex: none; background: #e6e6e6; border-right: 2px solid #c6c6c6; display: flex; flex-direction: column; }
.nav-head { height: 56px; display: flex; align-items: center; padding: 0 0 4px 12px; }
.nav-head h2 { margin: 0; width: 264px; font-size: 21px; font-weight: 400; color: #333; line-height: 52px; height: 52px; }
.nav-chev { margin-top: -4px; }
.nav-x { margin: -4px 0 0 28px; }
.search { margin-left: 12px; width: 317px; height: 26px; background: #fff; border: 1px solid #ababab; display: flex; align-items: center; padding: 0 6px; color: #777; }
.search span { flex: 1; }
.search .chev { margin-left: 5px; width: 4px; height: 4px; }
.nav-tabs { margin-top: 19px; height: 24px; padding-left: 13px; display: flex; gap: 25px; color: #555; }
.nav-tabs .on { color: #2b579a; font-weight: 500; position: relative; }
.nav-tabs .on::after { content: ""; position: absolute; left: -1px; right: -1px; top: 20px; height: 3px; background: #2b579a; }
.jump { margin: 4px 0 0 27px; width: 290px; height: 17px; background: #fff; border: 1px solid #cfcfcf; display: flex; align-items: center; justify-content: center; }
.tree { margin-top: 1px; padding-right: 30px; }
.row { height: 21px; display: flex; align-items: center; white-space: nowrap; color: #4a4a4a; }
.row span { line-height: 20px; }
.tw { width: 17px; flex: none; height: 8px; position: relative; }
.tw.open::before { content: ""; position: absolute; left: 0; top: 0; border-style: solid; border-width: 0 0 7px 7px; border-color: transparent transparent #555 transparent; }
.tw.shut::before { content: ""; position: absolute; left: 1px; top: 0; width: 0; height: 0; border-style: solid; border-width: 4px 0 4px 5px; border-color: transparent transparent transparent #888; }
.l0 { padding-left: 16px; } .l1 { padding-left: 33px; } .l2 { padding-left: 49px; } .l3 { padding-left: 65px; }
.current span { flex: 1; background: #c3d6f2; margin-left: -5px; padding-left: 5px; height: 20px; }
.gutter-left { width: 261px; flex: none; background: #e6e6e6; border-right: 1px solid #c9c9c9; }
.page { width: 1031px; flex: none; background: #fff; overflow: hidden; position: relative; color: #111; font-family: "Noto Serif CJK SC", "Liberation Serif", "Noto Sans CJK SC", serif; }
.gutter-right { flex: 1; background: #e6e6e6; border-left: 1px solid #c9c9c9; display: flex; justify-content: flex-end; }
.vscroll { width: 16px; background: #f0f0f0; display: flex; flex-direction: column; align-items: center; justify-content: space-between; padding: 2px 0; position: relative; }
.sb-btn { width: 15px; height: 15px; background: #fff; border: 1px solid #8a8a8a; display: flex; align-items: center; justify-content: center; }
.sb-thumb { position: absolute; top: 451px; left: 2px; width: 12px; height: 15px; background: #fff; border: 1px solid #8a8a8a; }
.crop { position: absolute; width: 31px; height: 30px; top: 82px; border-bottom: 1px solid #b0b0b0; }
.crop-l { left: 91px; border-right: 1px solid #b0b0b0; }
.crop-r { left: 909px; border-left: 1px solid #b0b0b0; }
.page-header { height: 88px; padding: 0 110px 6px 0; display: flex; justify-content: flex-end; align-items: flex-end; color: #888; font-size: 20px; font-weight: 700; line-height: 28px; }
.pm { display: inline-block; width: 13px; color: #a0a0a0; font: 400 19px/1 "DejaVu Sans", sans-serif; text-align: left; vertical-align: -1px; }
.page-header .pm { margin-bottom: 4px; }
.band { height: 12px; border-bottom: 2px solid #e6e6e6; background: repeating-linear-gradient(90deg, rgba(240,170,140,.22) 0 4px, rgba(240,130,140,0) 4px 8px), linear-gradient(90deg, #ce8489, #ef8088); }
.heading { margin: 0 0 0 112px; height: 60px; padding-bottom: 4px; display: flex; align-items: center; font-size: 24px; font-weight: 700; line-height: 30px; white-space: pre; color: #111; }
.num { word-spacing: -1.500px; }
.bullet { width: 6px; height: 6px; background: #000; margin: 10px 5px 0 0; }
.heading .pm { font-size: 20px; margin-left: 4px; width: 16px; }
.boxed { position: relative; white-space: nowrap; font-feature-settings: "halt"; }
.boxed::after { content: ""; position: absolute; left: 3px; right: -1px; top: -6px; bottom: -1px; border: 3px solid #cf1020; }
.b2::after { left: -3px; right: 2px; top: -3px; bottom: -8px; }
.nar { font-size: 15.500px; letter-spacing: -1.200px; }
.spec { margin-left: 129px; border-collapse: collapse; table-layout: fixed; width: 791px; font-size: 18px; text-align: center; }
.spec col.c1 { width: 111px; } .spec col.c2 { width: 284px; } .spec col.c3 { width: 376px; } .spec col.c4 { width: 20px; }
.spec tr { height: 40.300px; }
.spec th, .spec td { border: 1px solid #000; padding: 0 0 2px 12px; font-weight: 400; line-height: 24px; }
.spec th { font-weight: 700; }
.spec .end { border: 0; border-left: 1px solid #000; text-align: left; vertical-align: top; padding: 4px 0 0 0; line-height: 14px; }
.squiggle { text-decoration: underline wavy #e00000 1px; }

/* status */
.status { height: 22px; flex: none; background: #f1f1f1; border-top: 1px solid #c6c6c6; display: flex; align-items: center; white-space: nowrap; color: #444; padding-left: 10px; font-size: 12.500px; }
.s2 { margin-left: 19px; } .s3 { margin-left: 19px; } .s4 { margin-left: 16px; } .s5 { margin-left: 15px; } .s6 { margin-left: 19px; } .s7 { margin-left: 3px; font-weight: 500; color: #333; }
.v-on { width: 40px; height: 21px; background: #c6c6c6; display: flex; align-items: center; justify-content: center; margin-left: 13px; }
.v3 { margin-left: 13px; }
.zoom { margin: 0 8px 0 21px; }

/* side strip */
.side { width: 35px; display: flex; flex-direction: column; background: #fff; overflow: hidden; height: 174px; }
.side-top { height: 38px; background: #e6edfb; padding: 10px 0 0 8px; }
.toggle { display: flex; width: 27px; height: 16px; background: #d5dce8; border-radius: 3px 0 0 3px; padding-left: 11px; }
.toggle b { flex: 1; background: #fff; position: relative; border-radius: 3px 0 0 3px; }
.toggle b::after { content: ""; position: absolute; left: 2px; right: 2px; top: 7px; height: 2px; background: #555; }
.side-mid { height: 76px; border-bottom: 1px solid #d0d0d0; padding-top: 4px; }
.dbl { display: block; font: 22px/30px "DejaVu Sans"; color: #888; padding-left: 11px; }
.fav { display: flex; align-items: center; padding: 7px 0 0 11px; white-space: nowrap; font-size: 13px; }
.star { color: #ffb900; font-size: 18px; line-height: 20px; margin-right: 2px; }
.side-dark { height: 60px; background: #4d4d4d; }

/* taskbar */
.taskbar { height: 16px; flex: none; background: linear-gradient(90deg, #22323c, #23343f 70%, #2a3b44); display: flex; overflow: hidden; color: #fff; }
.task { width: 49px; height: 16px; flex: none; display: flex; justify-content: center; padding-top: 8px; }
.task:nth-child(1) { width: 46px; }
.tile-o { background: #a96a34; }
.tile-a { background: #4d5a62; }
.ti { display: block; width: 20px; height: 22px; }
.ti.win { width: 17px; margin-top: 4px; background: linear-gradient(90deg, #fff 48%, transparent 48%, transparent 54%, #fff 54%); }
.ring { border: 4px solid; border-radius: 50%; background: transparent; }
.white { border-color: #fff; border-width: 2px; width: 17px; margin-top: 1px; }
.olive { border-color: #5a7326; }
.lime { border-color: #93c01f; background: #333; }
.blue { border-color: #1e88e5; }
.box { border-radius: 3px 3px 0 0; }
.grayc { background: linear-gradient(#9aa, #9aa 3px, #55c8e8 3px); width: 18px; }
.orange { background: #e99a3b; }
.whitec { background: #f6f6f6; }
.bluec { background: #1b87e6; }
.psc { background: #0a2a38; border: 1px solid #31a8ff; }
.redc { background: #1d0d0d; border: 2px solid #d3221c; }
.excel { background: #1e9b5e; }
.wordc { background: #2f6fd0; }
.brown { background: linear-gradient(90deg, #b8813f 60%, #1d8a4a 60%); }
.bluec2 { background: #4d9af2; }
.blob { border-radius: 50%; }
.rainbow { background: conic-gradient(#e040a0, #7050e0, #30b0e0, #e0a030, #e040a0); width: 17px; }
.bluedots { background: radial-gradient(circle at 70% 25%, #50a0d8 0 4px, transparent 4px), radial-gradient(circle at 25% 60%, #1470b0 0 5px, transparent 5px); }
.globe { background: #1f6fc0; }
.greenc { background: #3ec45a; }
.slim { width: 13px; border-radius: 2px 2px 0 0; }
.graylight { background: #c9d4d6; }
.dots { background: radial-gradient(circle at 30% 30%, #d0a040 0 1.500px, transparent 2px), radial-gradient(circle at 75% 30%, #8aa0b0 0 1.500px, transparent 2px); }
.clock { margin-right: 29px; padding-top: 1px; line-height: 15px; color: #fff; }
.notify { width: 16px; height: 4px; margin: 12px 3px 0 0; background: #fff; }
```
